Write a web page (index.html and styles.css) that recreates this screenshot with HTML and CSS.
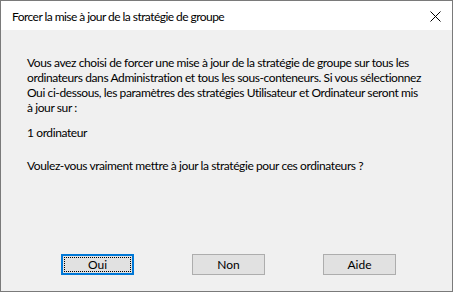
FILE: index.html
```html
<!DOCTYPE html>
<html lang="fr">
<head>
  <meta charset="UTF-8">
  <title>Forcer la mise à jour de la stratégie de groupe</title>
  <link rel="stylesheet" href="styles.css">
</head>
<body>
<div class="fenetre">
  <div class="titre">
    <span class="titre-texte">Forcer la mise à jour de la stratégie de groupe</span>
    <span class="fermer">
      <svg width="11" height="11" viewBox="0 0 11 11">
        <path d="M0.5 0.5 L10.5 10.5 M10.5 0.5 L0.5 10.5" stroke="#000" stroke-width="1" fill="none"/>
      </svg>
    </span>
  </div>
  <div class="contenu">
    <p class="texte">Vous avez choisi de forcer une mise à jour de la stratégie de groupe sur tous les<br>
    ordinateurs dans Administration et tous les sous-conteneurs. Si vous sélectionnez<br>
    Oui ci-dessous, les paramètres des stratégies Utilisateur et Ordinateur seront mis<br>
    à jour sur :</p>
    <p class="compte">1 ordinateur</p>
    <p class="question">Voulez-vous vraiment mettre à jour la stratégie pour ces ordinateurs ?</p>
    <div class="boutons">
      <button class="bouton defaut"><span>Oui</span></button>
      <button class="bouton">Non</button>
      <button class="bouton">Aide</button>
    </div>
  </div>
</div>
</body>
</html>
```

FILE: styles.css
```css
html, body {
  margin: 0;
  padding: 0;
}
body {
  width: 453px;
  height: 292px;
  overflow: hidden;
  font-family: Lato, "Noto Sans", sans-serif;
  font-size: 12px;
  color: #000;
}
.fenetre {
  box-sizing: border-box;
  width: 453px;
  height: 292px;
  border: 1px solid #7a7a7a;
  background: #f0f0f0;
  display: flex;
  flex-direction: column;
}
.titre {
  height: 29px;
  background: #fff;
  display: flex;
  align-items: center;
  justify-content: space-between;
  padding: 0 11px 0 11px;
  flex-shrink: 0;
}
.titre-texte {
  font-size: 12px;
  letter-spacing: -0.55px;
  padding-top: 1px;
}
.fermer {
  display: flex;
  align-items: center;
  padding-top: 2px;
}
.contenu {
  flex: 1;
  padding: 0 0 0 26px;
  display: flex;
  flex-direction: column;
}
.contenu p {
  line-height: 15px;
  letter-spacing: -0.4px;
  white-space: nowrap;
}
.texte {
  margin: 25px 0 0 0;
}
.compte {
  margin: 10px 0 0 0;
}
.question {
  margin: 18px 0 0 0;
}
.boutons {
  display: flex;
  gap: 58px;
  margin: 81px 0 0 34px;
}
.bouton {
  box-sizing: border-box;
  width: 73px;
  height: 21px;
  background: #e1e1e1;
  border: 1px solid #adadad;
  font-family: inherit;
  font-size: 12px;
  color: #000;
  padding: 0;
  margin: 0;
}
.bouton.defaut {
  border: 2px solid #0078d7;
  padding: 1px;
}
.bouton.defaut span {
  display: flex;
  align-items: center;
  justify-content: center;
  height: 100%;
  border: 1px dotted #000;
  box-sizing: border-box;
}
```
